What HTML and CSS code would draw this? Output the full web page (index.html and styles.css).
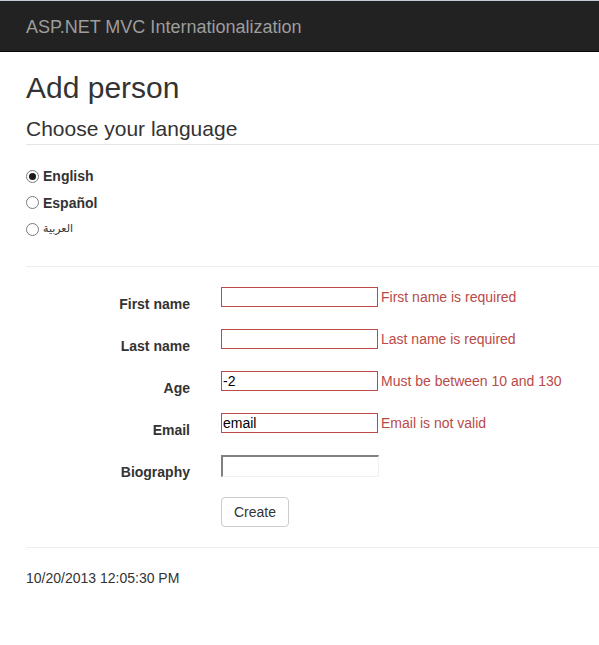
FILE: index.html
```html
<!DOCTYPE html>
<html>
<head>
<meta charset="utf-8">
<link rel="stylesheet" href="styles.css">
</head>
<body>
<div class="topline"></div>
<div class="navbar"><span class="brand">ASP.NET MVC Internationalization</span></div>
<div class="content">
  <h2 class="title">Add person</h2>
  <div class="legend">Choose your language</div>
  <div class="langs">
    <label class="lang"><input class="radio" type="radio" name="lang" checked> English</label>
    <label class="lang"><input class="radio" type="radio" name="lang"> Español</label>
    <label class="lang"><input class="radio" type="radio" name="lang"> <span class="ar" lang="ar">العربية</span></label>
  </div>
  <hr class="rule">
  <form class="form">
    <div class="group">
      <label class="ctl">First name</label>
      <div class="field"><input class="inp invalid" type="text"><span class="err">First name is required</span></div>
    </div>
    <div class="group">
      <label class="ctl">Last name</label>
      <div class="field"><input class="inp invalid" type="text"><span class="err">Last name is required</span></div>
    </div>
    <div class="group">
      <label class="ctl">Age</label>
      <div class="field"><input class="inp invalid" type="text" value="-2"><span class="err">Must be between 10 and 130</span></div>
    </div>
    <div class="group">
      <label class="ctl">Email</label>
      <div class="field"><input class="inp invalid" type="text" value="email"><span class="err">Email is not valid</span></div>
    </div>
    <div class="group">
      <label class="ctl">Biography</label>
      <div class="field"><textarea class="bio" rows="1"></textarea></div>
    </div>
    <div class="group">
      <span class="ctl"></span>
      <div class="field"><button type="button" class="btn">Create</button></div>
    </div>
  </form>
  <hr class="rule foot-rule">
  <footer class="foot">10/20/2013 12:05:30 PM</footer>
</div>
</body>
</html>
```
FILE: styles.css
```css
html, body {
  margin: 0;
  padding: 0;
  background: #fff;
}
body {
  font-family: "Liberation Sans", Arial, sans-serif;
  font-size: 14px;
  line-height: 20px;
  color: #333;
}
.topline {
  height: 1px;
  background: #c3cad3;
}
.navbar {
  height: 50px;
  background: #222;
  border-bottom: 1px solid #080808;
  padding-left: 26px;
  display: flex;
  align-items: center;
}
.brand {
  font-size: 18px;
  color: #9d9d9d;
  line-height: 20px;
  margin-top: 1px;
}
.content {
  padding-left: 26px;
}
.title {
  font-size: 30px;
  font-weight: normal;
  line-height: 33px;
  margin: 19px 0 10px;
  color: #333;
}
.legend {
  font-size: 21px;
  line-height: 30px;
  border-bottom: 1px solid #e5e5e5;
  margin-bottom: 18px;
  color: #333;
}
.langs {
  display: flex;
  flex-direction: column;
}
.lang {
  display: flex;
  align-items: center;
  height: 26.5px;
  font-weight: bold;
  color: #333;
}
.radio {
  -webkit-appearance: none;
  appearance: none;
  box-sizing: border-box;
  margin: 0 4px 0 0;
  width: 13px;
  height: 13px;
  border: 1px solid #7a7a7a;
  border-radius: 50%;
  background: #fff;
  display: inline-flex;
  align-items: center;
  justify-content: center;
}
.radio:checked::after {
  content: "";
  width: 7px;
  height: 7px;
  border-radius: 50%;
  background: #1a1a1a;
}
.ar {
  font-family: "DejaVu Sans", sans-serif;
  font-size: 11px;
  font-weight: normal;
}
.rule {
  border: 0;
  border-top: 1px solid #eee;
  margin: 23px 0 20px;
}
.form {
  display: flex;
  flex-direction: column;
}
.group {
  display: grid;
  grid-template-columns: 164px 1fr;
  column-gap: 31px;
  margin-bottom: 15px;
  min-height: 27px;
}
.group:last-child {
  margin-bottom: 0;
}
.ctl {
  text-align: right;
  font-weight: bold;
  padding-top: 7px;
  color: #333;
}
.field {
  display: flex;
  align-items: flex-start;
}
.inp {
  box-sizing: border-box;
  width: 157px;
  height: 20px;
  margin: 0;
  padding: 1px 1px;
  border: 1px solid #b94a48;
  font-family: "Liberation Sans", Arial, sans-serif;
  font-size: 14px;
  color: #000;
  background: #fff;
  outline: none;
}
.err {
  color: #b94a48;
  margin-left: 3px;
  line-height: 20px;
}
.bio {
  box-sizing: border-box;
  width: 158px;
  height: 22px;
  margin: 0;
  padding: 0;
  resize: none;
  border-style: solid;
  border-width: 2px 1px 1px 2px;
  border-color: #808080 #f0f0f0 #f0f0f0 #808080;
  background: #fff;
  font-family: "Liberation Sans", Arial, sans-serif;
  font-size: 14px;
}
.btn {
  box-sizing: border-box;
  height: 30px;
  padding: 4px 12px;
  font-family: "Liberation Sans", Arial, sans-serif;
  font-size: 14px;
  line-height: 20px;
  color: #333;
  background: #fff;
  border: 1px solid #ccc;
  border-radius: 4px;
  margin: 0;
}
.foot-rule {
  margin: 20px 0 20px;
}
.foot {
  color: #333;
}
```
